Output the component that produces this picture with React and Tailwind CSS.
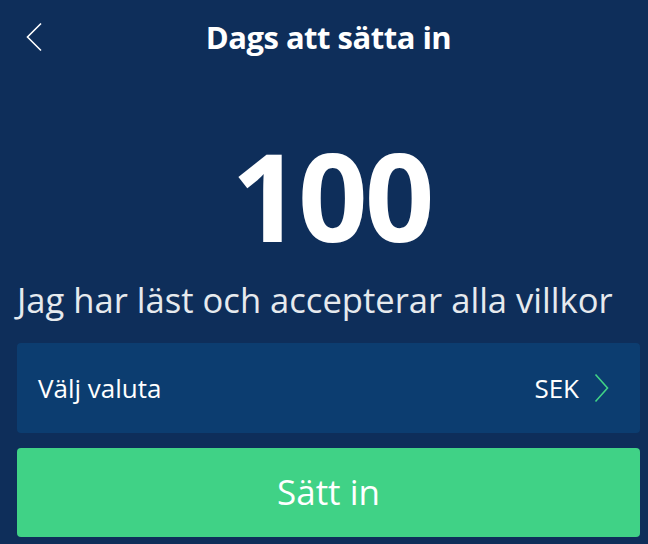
import React, { useState } from 'react';

const BackIcon = () => (
  <svg width="22" height="30" viewBox="0 0 22 30" fill="none">
    <path d="M18 1.5 L4.5 15 L18 28.5" stroke="white" strokeWidth="1.6" />
  </svg>
);

const ChevronRight = () => (
  <svg width="15" height="30" viewBox="0 0 15 30" fill="none">
    <path d="M1.5 1.5 L13.5 15 L1.5 28.5" stroke="#40d286" strokeWidth="1.6" />
  </svg>
);

const App = () => {
  const [amount] = useState(100);
  const [currency] = useState('SEK');

  return (
    <div className="w-[648px] h-[544px] bg-[#0e2e5a] font-['Open_Sans',sans-serif] flex flex-col overflow-hidden pl-[17px] pr-[8px]">
      {/* --- HEADER --- */}
      <div className="relative h-[74px] flex items-center justify-center">
        <button className="absolute left-[6px] top-[22px]">
          <BackIcon />
        </button>
        <h1 className="text-white font-bold text-[31px] tracking-[-0.5px]">Dags att sätta in</h1>
      </div>

      {/* --- AMOUNT --- */}
      <div className="flex justify-center mt-[60px] h-[146px] pl-[6px]">
        <span className="text-white font-bold text-[122px] leading-none tracking-[-3px]">{amount}</span>
      </div>

      <p className="text-[#e6eaee] text-[34.6px] leading-[40px] whitespace-nowrap">Jag har läst och accepterar alla villkor</p>

      {/* --- CURRENCY + SUBMIT --- */}
      <div className="mt-[23px] flex flex-col gap-[15px]">
        <div className="h-[90px] bg-[#0c3d70] rounded-[4px] flex items-center justify-between pl-[21px] pr-[31px]">
          <span className="text-white text-[26px]">Välj valuta</span>
          <div className="flex items-center gap-[15px]">
            <span className="text-white text-[26px]">{currency}</span>
            <ChevronRight />
          </div>
        </div>
        <button className="h-[89px] bg-[#40d286] rounded-[4px] text-white text-[35px]">Sätt in</button>
      </div>
    </div>
  );
};

export default App;
